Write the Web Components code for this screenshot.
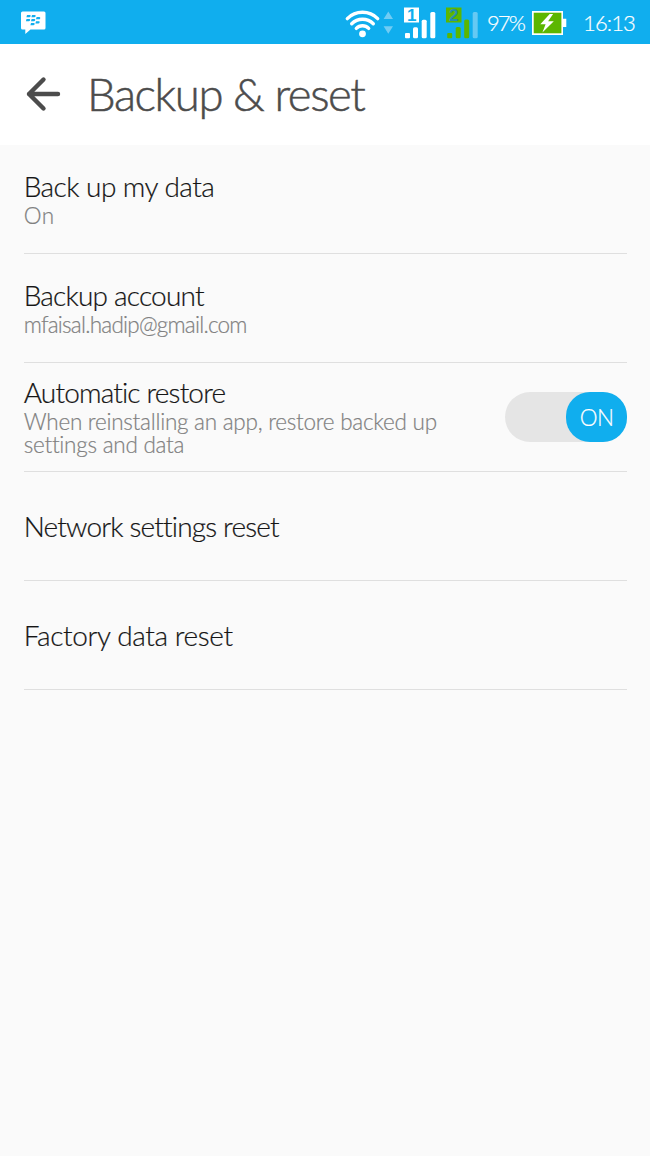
<!DOCTYPE html>
<html lang="en">
<head>
<meta charset="utf-8">
<title>Backup &amp; reset</title>
<style>
html,body{margin:0;height:100%;background:#fafafa}
body{font-family:Lato,"Open Sans",sans-serif;font-weight:300}
</style>
</head>
<body>
<settings-screen></settings-screen>
<script>
const define=(name,html,after)=>{
  customElements.define(name,class extends HTMLElement{
    connectedCallback(){
      if(this.shadowRoot)return;
      this.attachShadow({mode:'open'}).innerHTML=html;
      if(after)after(this);
    }
  });
};

// Text whose tracking is adjusted so that, on one line, it spans the width
// given in pixels; with the wrap attribute it may then break into lines.
define('fit-text','<style>:host{display:block;white-space:nowrap;-webkit-text-stroke:.2px currentColor}span{display:inline-block}:host([wrap]) span.done{display:block;width:430px;white-space:normal}</style><span><slot></slot></span>',el=>{
  const span=el.shadowRoot.querySelector('span');
  const target=+el.getAttribute('w');
  const n=el.textContent.length;
  const apply=()=>{
    span.classList.remove('done');
    el.style.letterSpacing='0px';
    el.style.letterSpacing=((target-span.getBoundingClientRect().width)/n)+'px';
    span.classList.add('done');
  };
  requestAnimationFrame(apply);
  apply();
});

define('message-icon',`<style>:host,svg{display:block}</style>
<svg width="25" height="44" viewBox="21 0 25 44"><path fill="#fff" d="M22.5 11.5H44a1.5 1.5 0 0 1 1.5 1.5v15a1.5 1.5 0 0 1-1.5 1.5H30.5L25.3 34v-4.5H22.5A1.5 1.5 0 0 1 21 28V13a1.500 1.500 0 0 1 1.500-1.500Z"/>
<g fill="#10aeee"><path id="d" d="M27 15h2.800q1.200.1.800 1.300-.3.900-1.300.900H26.400Z"/><use href="#d" x="5"/><use href="#d" x="-.5" y="4"/><use href="#d" x="4.600" y="4"/><use href="#d" x="9.600" y="2.100"/><use href="#d" x="4" y="8"/><use href="#d" x="9" y="6.200"/></g></svg>`);

define('network-icons',`<style>:host,svg{display:block}text{font:bold 17px "Liberation Sans",Arial,sans-serif}</style>
<svg width="138" height="44" viewBox="344 0 138 44">
<g fill="none" stroke="#fff" stroke-width="3.400" stroke-linecap="round"><path d="M347.300 18.600a21.500 21.500 0 0 1 30.400 0"/><path d="M351.700 23.700a15.200 15.200 0 0 1 21.600 0"/><path d="M356.300 28.400a8.700 8.700 0 0 1 12.400 0"/></g><circle cx="362.500" cy="33.800" r="3.400" fill="#fff"/>
<path fill="#70ccf4" d="m388.300 11.500 4.700 7.500h-9.400ZM383.600 26.300h9.400l-4.700 7.500Z"/>
<path fill="#fff" d="M404 7.500h15v15h-15Z"/><text x="407" y="21" fill="#10aeee">1</text>
<g fill="#fff"><rect x="405" y="33" width="5" height="5.200" rx="1"/><rect x="413" y="27.300" width="5" height="10.900" rx="1.500"/><rect x="421.700" y="19.800" width="5" height="18.400" rx="1.500"/><rect x="430.300" y="12" width="5" height="26.200" rx="1.500"/></g>
<path fill="#5cb600" d="M446 7.500h15.500v15H446Z"/><text x="449" y="21" fill="#258fac">2</text>
<g fill="#5cb600"><rect x="447.200" y="33" width="5" height="5.200" rx="1"/><rect x="455.700" y="27" width="5" height="11.200" rx="1.500"/><rect x="464.200" y="19.500" width="5" height="18.700" rx="1.500"/></g><rect x="472.700" y="12" width="5" height="26.200" rx="1.500" fill="#66c9f3"/>
</svg>`);

define('battery-icon',`<style>:host,svg{display:block}</style>
<svg width="36" height="44" viewBox="531 0 36 44"><path fill="#fff" d="M532 11h31v7.800h3.300v8.200H563v8h-31Z"/><path fill="#5cb600" d="M533.700 12.700h27.700v20.600h-27.700Z"/><path fill="#fff" d="m549.700 14-9.400 10.300h5.300L542.400 32.500l11.400-11.300h-5.700l5-7.200Z"/></svg>`);

define('status-bar',`<style>:host{display:flex;align-items:center;box-sizing:border-box;height:43.500px;padding:0 14px 0 21px;background:#10aeee;color:#fff;font-size:22px}
network-icons{margin-left:auto}.p,.t{padding-top:2px}.p{width:38px;margin-left:5px}battery-icon{margin-left:6px}.t{width:53px;margin-left:16px}</style>
<message-icon></message-icon><network-icons></network-icons><fit-text class="p" w="37">97%</fit-text><battery-icon></battery-icon><fit-text class="t" w="52">16:13</fit-text>`);

define('title-bar',`<style>:host{display:flex;align-items:center;box-sizing:border-box;height:101.500px;padding:0 0 1px 25px;background:#fff;color:#4c4c4c;font-size:45.500px}
svg{display:block;margin-right:26px}</style>
<svg width="36" height="36" viewBox="0 0 36 36" fill="none" stroke="#4c4c4c" stroke-width="4.400" stroke-linecap="round" stroke-linejoin="round"><path d="M18.500 3.500 4 18l14.500 14.500M4 18h29"/></svg><slot></slot>`);

define('toggle-switch',`<style>:host{display:flex;justify-content:flex-end;width:122px;height:50.500px;border-radius:25.250px;background:#e5e5e5}
.k{display:flex;align-items:center;justify-content:center;width:61px;border-radius:24px;background:#10aeee;color:#fff;font-size:22.500px}</style>
<div class="k"><fit-text w="33.500">ON</fit-text></div>`);

define('settings-item',`<style>:host{display:flex;align-items:center;justify-content:space-between;box-sizing:border-box;height:109px;border-bottom:1px solid #dfdfdf;color:#151515;font-size:28px;line-height:33px}
.text{display:flex;flex-direction:column;gap:1px;padding-bottom:2px}
.text.single{padding-bottom:0}
.sub{color:#808080;font-size:22.500px;line-height:23px}</style>
<div class="text"><slot></slot><div class="sub"><slot name="sub"></slot></div></div><slot name="control"></slot>`,el=>{
  if(el.querySelector('[slot=sub]'))return;
  el.shadowRoot.querySelector('.sub').remove();
  el.shadowRoot.querySelector('.text').classList.add('single');
});

define('settings-screen',`<style>:host{display:flex;flex-direction:column;min-height:100%}
.list{display:flex;flex-direction:column;padding:0 23px 0 24px}.list fit-text{margin-left:-.3px}
title-bar fit-text{-webkit-text-stroke:.5px currentColor}</style>
<status-bar></status-bar>
<title-bar><fit-text w="277.500">Backup &amp; reset</fit-text></title-bar>
<div class="list">
<settings-item><fit-text w="190.500">Back up my data</fit-text><fit-text slot="sub" w="31">On</fit-text></settings-item>
<settings-item><fit-text w="180">Backup account</fit-text><fit-text slot="sub" w="223">mfaisal.hadip@gmail.com</fit-text></settings-item>
<settings-item><fit-text w="202">Automatic restore</fit-text><fit-text slot="sub" wrap w="579">When reinstalling an app, restore backed up settings and data</fit-text><toggle-switch slot="control"></toggle-switch></settings-item>
<settings-item><fit-text w="254.500">Network settings reset</fit-text></settings-item>
<settings-item><fit-text w="209">Factory data reset</fit-text></settings-item>
</div>`);
</script>
</body>
</html>
